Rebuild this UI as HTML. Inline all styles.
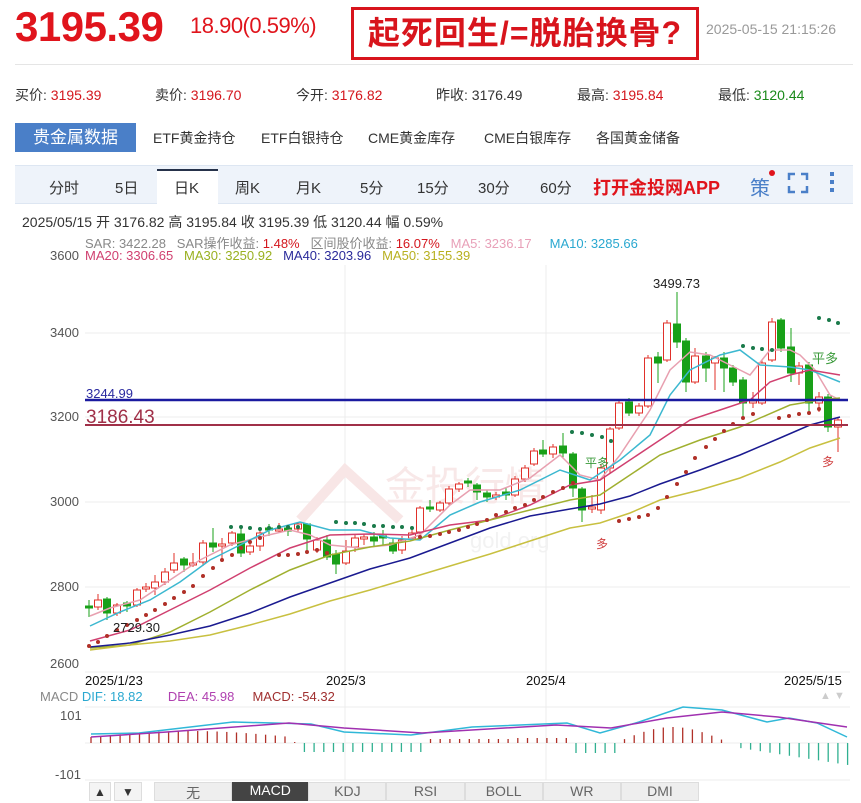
<!DOCTYPE html>
<html><head><meta charset="utf-8">
<style>
*{margin:0;padding:0;box-sizing:border-box}
body{width:861px;height:801px;background:#fff;position:relative;overflow:hidden;font-family:"Liberation Sans","Noto Sans CJK SC",sans-serif;color:#333}
.a{position:absolute;white-space:nowrap}
.r{color:#d4161d}.g{color:#1a8a1a}
</style></head><body>
<div class="a" style="left:15px;top:3px;font-size:42px;font-weight:bold;color:#e0141c;letter-spacing:-0.5px">3195.39</div>
<div class="a" style="left:190px;top:13px;font-size:22px;color:#e0141c;letter-spacing:-0.5px">18.90(0.59%)</div>
<div class="a" style="left:351px;top:7px;width:348px;height:53px;border:3px solid #d8141c;font-size:32px;font-weight:bold;color:#d8141c;text-align:center;line-height:46px;letter-spacing:1px">起死回生/=脱胎换骨?</div>
<div class="a" style="left:706px;top:21px;font-size:14px;color:#999">2025-05-15 21:15:26</div>
<div class="a" style="left:15px;top:64px;width:838px;height:1px;background:#e5e5e5"></div>
<div class="a" style="left:15px;top:85px;font-size:14px">买价: <span class="r">3195.39</span></div>
<div class="a" style="left:155px;top:85px;font-size:14px">卖价: <span class="r">3196.70</span></div>
<div class="a" style="left:296px;top:85px;font-size:14px">今开: <span class="r">3176.82</span></div>
<div class="a" style="left:436px;top:85px;font-size:14px">昨收: 3176.49</div>
<div class="a" style="left:577px;top:85px;font-size:14px">最高: <span class="r">3195.84</span></div>
<div class="a" style="left:718px;top:85px;font-size:14px">最低: <span class="g">3120.44</span></div>
<div class="a" style="left:15px;top:123px;width:121px;height:29px;background:#4a7fc8;color:#fff;font-size:17px;line-height:29px;text-align:center">贵金属数据</div>
<div class="a" style="left:153px;top:128px;font-size:14px">ETF黄金持仓</div>
<div class="a" style="left:261px;top:128px;font-size:14px">ETF白银持仓</div>
<div class="a" style="left:368px;top:128px;font-size:14px">CME黄金库存</div>
<div class="a" style="left:484px;top:128px;font-size:14px">CME白银库存</div>
<div class="a" style="left:596px;top:128px;font-size:14px">各国黄金储备</div>
<div class="a" style="left:15px;top:165px;width:838px;height:39px;background:#eef3fa;border-top:1px solid #dde6f2;border-bottom:1px solid #dde6f2"></div>
<div class="a" style="left:157px;top:169px;width:61px;height:35px;background:#fff;border-top:2px solid #26324a"></div>
<div class="a" style="left:49px;top:177px;font-size:15px">分时</div>
<div class="a" style="left:115px;top:177px;font-size:15px">5日</div>
<div class="a" style="left:174px;top:177px;font-size:15px">日K</div>
<div class="a" style="left:235px;top:177px;font-size:15px">周K</div>
<div class="a" style="left:296px;top:177px;font-size:15px">月K</div>
<div class="a" style="left:360px;top:177px;font-size:15px">5分</div>
<div class="a" style="left:417px;top:177px;font-size:15px">15分</div>
<div class="a" style="left:478px;top:177px;font-size:15px">30分</div>
<div class="a" style="left:540px;top:177px;font-size:15px">60分</div>
<div class="a" style="left:593px;top:174px;font-size:18px;font-weight:bold;color:#e0141c">打开金投网APP</div>
<div class="a" style="left:750px;top:172px;font-size:20px;color:#4a7fc8">策</div>
<div class="a" style="left:769px;top:170px;width:6px;height:6px;border-radius:3px;background:#e0141c"></div>
<svg class="a" style="left:787px;top:172px" width="22" height="22"><path d="M2 8V2H8M14 2H20V8M20 14V20H14M8 20H2V14" stroke="#4a7fc8" stroke-width="2.5" fill="none"/></svg>
<div class="a" style="left:830px;top:172px;width:4px;height:4px;background:#4a7fc8;box-shadow:0 8px 0 #4a7fc8,0 16px 0 #4a7fc8"></div>
<div class="a" style="left:22px;top:212px;font-size:14px">2025/05/15 开 3176.82 高 3195.84 收 3195.39 低 3120.44 幅 0.59%</div>
<div class="a" style="left:85px;top:233px;font-size:13px;color:#888">SAR: 3422.28 &nbsp; SAR操作收益: <span class="r">1.48%</span> &nbsp; 区间股价收益: <span class="r">16.07%</span> &nbsp; <span style="color:#e8a0b8">MA5: 3236.17</span> &nbsp; &nbsp; <span style="color:#2aa8d0">MA10: 3285.66</span></div>
<div class="a" style="left:50px;top:248px;font-size:13px;color:#555">3600</div>
<div class="a" style="left:85px;top:248px;font-size:13px"><span style="color:#d04070">MA20: 3306.65</span> &nbsp; <span style="color:#9ab020">MA30: 3250.92</span> &nbsp; <span style="color:#2a2a9a">MA40: 3203.96</span> &nbsp; <span style="color:#b8b020">MA50: 3155.39</span></div>
<div class="a" style="left:50px;top:325px;font-size:13px;color:#555">3400</div>
<div class="a" style="left:50px;top:494px;font-size:13px;color:#555">3000</div>
<div class="a" style="left:50px;top:579px;font-size:13px;color:#555">2800</div>
<div class="a" style="left:50px;top:656px;font-size:13px;color:#555">2600</div>
<div class="a" style="left:50px;top:409px;font-size:13px;color:#555">3200</div>
<svg class="a" style="left:0;top:0" width="861" height="801" id="ch">
<g stroke="#ececec" stroke-width="1">
<line x1="85" y1="333" x2="850" y2="333"/><line x1="85" y1="417" x2="850" y2="417"/><line x1="85" y1="502" x2="850" y2="502"/><line x1="85" y1="587" x2="850" y2="587"/><line x1="85" y1="672" x2="850" y2="672"/>
<line x1="345" y1="265" x2="345" y2="780"/><line x1="546" y1="265" x2="546" y2="780"/>
<line x1="85" y1="707" x2="850" y2="707"/><line x1="85" y1="780" x2="850" y2="780"/>
</g>
<text x="385" y="500" font-size="40" fill="#f8e8e8" font-family="Noto Sans CJK SC">金投行情</text>
<text x="470" y="548" font-size="22" fill="#f2f2f2" font-family="Liberation Sans">gold.org</text>
<path d="M300 520 L345 470 L400 520" stroke="#f8e6e6" stroke-width="10" fill="none"/>
<g id="cd"></g>
<g fill="none" stroke-width="1.5" id="ma"></g>
<line x1="85" y1="400" x2="848" y2="400" stroke="#1a1aa0" stroke-width="2.5"/>
<line x1="85" y1="425" x2="848" y2="425" stroke="#a03048" stroke-width="2"/>
<text x="86" y="398" font-size="13" fill="#2a2aa0">3244.99</text>
<text x="86" y="423" font-size="19" fill="#a03048">3186.43</text>
<text x="653" y="288" font-size="13" fill="#222">3499.73</text>
<text x="113" y="632" font-size="13" fill="#222">2729.30</text>
<text x="812" y="363" font-size="13" fill="#3a9a3a">平多</text>
<text x="585" y="467" font-size="12" fill="#3a9a3a">平多</text>
<text x="596" y="548" font-size="12" fill="#d04040">多</text>
<text x="822" y="466" font-size="12" fill="#d04040">多</text>
<g id="mc"></g>
</svg>
<div class="a" style="left:85px;top:673px;font-size:13px;color:#111">2025/1/23</div>
<div class="a" style="left:326px;top:673px;font-size:13px;color:#111">2025/3</div>
<div class="a" style="left:526px;top:673px;font-size:13px;color:#111">2025/4</div>
<div class="a" style="left:784px;top:673px;font-size:13px;color:#111">2025/5/15</div>
<div class="a" style="left:40px;top:689px;font-size:13px;color:#888">MACD <span style="color:#2aa8d0">DIF: 18.82</span> &nbsp; &nbsp; &nbsp; <span style="color:#b040b0">DEA: 45.98</span> &nbsp; &nbsp; <span style="color:#a03030">MACD: -54.32</span></div>
<div class="a" style="left:60px;top:708px;font-size:13px;color:#555">101</div>
<div class="a" style="left:55px;top:767px;font-size:13px;color:#555">-101</div>
<div class="a" style="left:820px;top:690px;font-size:11px;color:#ccc">▲ ▼</div>
<div class="a" style="left:89px;top:782px;width:22px;height:19px;background:#f4f4f4;border:1px solid #ddd;font-size:12px;text-align:center;line-height:18px">▲</div>
<div class="a" style="left:114px;top:782px;width:28px;height:19px;background:#f4f4f4;border:1px solid #ddd;font-size:12px;text-align:center;line-height:18px">▼</div>
<div class="a" style="left:154px;top:782px;width:545px;height:19px;display:flex;font-size:14px;color:#666">
<div style="flex:1;background:#eee;border:1px solid #ddd;text-align:center">无</div>
<div style="flex:1;background:#444;color:#fff;text-align:center">MACD</div>
<div style="flex:1;background:#eee;border:1px solid #ddd;text-align:center">KDJ</div>
<div style="flex:1;background:#eee;border:1px solid #ddd;text-align:center">RSI</div>
<div style="flex:1;background:#eee;border:1px solid #ddd;text-align:center">BOLL</div>
<div style="flex:1;background:#eee;border:1px solid #ddd;text-align:center">WR</div>
<div style="flex:1;background:#eee;border:1px solid #ddd;text-align:center">DMI</div>
</div>
<script>
var NS="http://www.w3.org/2000/svg";
function el(p,t,a){var e=document.createElementNS(NS,t);for(var k in a)e.setAttribute(k,a[k]);p.appendChild(e);return e;}
var cd=document.getElementById('cd');
var C=[[89,606,608,0,600,617],[98,600,607,1,594,610],[107,599,613,0,597,620],[117,605,613,1,603,616],[127,603,606,0,601,612],[137,590,605,1,588,607],[146,587,589,1,583,592],[155,582,588,1,575,595],[165,572,582,1,568,585],[174,563,570,1,553,573],[184,559,565,0,557,572],[193,563,565,1,553,567],[203,543,562,1,540,566],[213,543,547,0,528,552],[222,544,546,1,538,562],[232,533,543,1,531,546],[241,534,553,0,528,557],[250,546,552,1,543,555],[260,533,546,1,531,551],[269,528,530,0,524,536],[279,529,531,1,523,533],[288,528,531,0,525,536],[298,524,529,1,522,532],[307,524,539,0,523,552],[317,540,550,1,537,553],[327,540,557,0,535,560],[336,554,564,0,550,574],[346,551,563,1,540,565],[355,538,547,1,535,552],[364,537,539,1,534,545],[374,537,541,0,532,547],[383,536,538,0,530,545],[393,543,551,0,538,554],[402,540,550,1,536,554],[412,533,538,1,530,540],[420,508,532,1,506,534],[430,507,509,0,500,512],[440,503,510,1,501,512],[449,489,503,1,486,505],[459,484,489,1,482,492],[468,481,483,0,478,487],[477,485,492,0,483,500],[487,493,497,0,490,502],[496,495,497,1,492,500],[506,492,495,0,488,500],[515,479,495,1,476,497],[525,468,479,1,465,482],[534,451,464,1,448,466],[543,450,454,0,440,457],[553,447,454,1,444,458],[563,446,453,0,433,458],[573,454,488,0,452,497],[582,489,510,0,487,522],[592,507,509,1,495,513],[601,468,510,1,464,514],[610,429,468,1,427,474],[619,403,428,1,401,430],[629,402,413,0,398,416],[639,406,413,1,403,416],[648,358,406,1,355,408],[658,357,363,0,352,383],[667,323,360,1,320,362],[677,324,342,0,292,348],[686,341,382,0,338,392],[695,356,382,1,348,384],[706,356,368,0,352,382],[715,358,363,1,356,390],[724,358,368,0,352,392],[733,368,382,0,365,386],[743,380,403,0,377,418],[753,401,403,1,392,408],[762,363,403,1,360,405],[772,322,360,1,318,362],[781,320,348,0,318,352],[791,347,373,0,328,382],[799,366,373,1,362,385],[809,365,403,0,362,413],[819,397,403,1,392,412],[828,397,427,0,394,432],[838,420,427,1,418,452]];
C.forEach(function(c){var col=c[3]?'#e0302a':'#18a018';
el(cd,'line',{x1:c[0],x2:c[0],y1:c[4],y2:c[5],stroke:col,'stroke-width':1});
el(cd,'rect',{x:c[0]-3.5,y:c[1],width:7,height:Math.max(1.5,c[2]-c[1]),fill:c[3]?'#fff':col,stroke:col,'stroke-width':1});});
var ma=document.getElementById('ma');
var L=[['#e8a0b0',"90,616 110,608 140,600 170,580 200,560 230,545 260,537 290,530 310,535 330,545 360,548 390,545 420,535 450,505 470,490 500,490 530,478 560,455 580,475 600,480 620,455 650,410 670,370 690,352 710,355 730,365 750,375 770,350 790,350 800,355 815,370 830,395 840,400"],
['#3cb8d0',"90,626 120,612 150,600 180,582 210,560 240,545 270,530 300,522 330,530 360,530 390,538 420,540 450,515 480,502 520,490 560,470 590,480 620,460 650,435 670,395 690,370 720,355 740,350 760,365 790,367 810,370 840,382"],
['#d04070',"90,641 130,630 170,610 210,590 250,568 290,548 330,535 370,534 410,535 450,525 490,520 530,505 570,485 600,480 630,460 660,440 690,420 720,410 750,400 770,382 790,375 810,370 840,375"],
['#a0b030',"90,648 130,645 170,632 210,612 250,590 290,570 330,555 370,547 410,541 450,530 490,520 530,510 570,500 600,495 630,475 660,455 700,440 740,427 760,418 790,405 820,400 840,398"],
['#1a1a90',"90,647 130,643 170,635 210,626 250,613 290,597 330,583 370,569 410,558 450,543 490,528 530,516 570,509 600,504 630,496 660,484 700,470 740,455 780,438 810,425 840,417"],
['#c8c040',"90,650 130,645 170,641 210,635 250,625 290,614 330,601 370,590 410,578 450,566 490,554 530,541 570,528 600,523 630,513 660,500 700,490 740,478 780,462 810,448 840,438"]];
L.forEach(function(l){el(ma,'polyline',{points:l[1],stroke:l[0]});});
var R=[[89,646],[98,642],[107,636],[117,630],[127,625],[137,620],[146,615],[155,610],[165,604],[174,598],[184,592],[193,586],[203,576],[213,568],[222,560],[232,555],[241,548],[250,542],[260,538],[279,555],[288,555],[298,554],[307,552],[317,550],[327,553],[420,537],[430,536],[440,534],[449,532],[459,530],[468,527],[477,524],[487,520],[496,515],[506,512],[515,508],[525,505],[534,500],[543,497],[553,492],[563,488],[573,483],[619,521],[629,519],[639,517],[648,515],[658,508],[667,497],[677,484],[686,472],[695,458],[706,447],[715,439],[724,431],[733,424],[743,418],[753,414],[779,418],[789,416],[799,414],[809,413],[819,409]];
R.forEach(function(p){el(ma,'circle',{cx:p[0],cy:p[1],r:2,fill:'#b03028',stroke:'none'});});
var G=[[231,527],[241,527],[250,528],[260,529],[269,528],[279,527],[288,527],[298,527],[336,522],[346,523],[355,523],[364,524],[374,526],[383,526],[393,527],[402,527],[412,528],[572,432],[582,433],[592,435],[602,437],[611,441],[743,346],[753,348],[762,349],[772,350],[819,318],[829,320],[838,323]];
G.forEach(function(p){el(ma,'circle',{cx:p[0],cy:p[1],r:2,fill:'#1a7a4a',stroke:'none'});});
var mc=document.getElementById('mc');
el(mc,'line',{x1:85,x2:848,y1:743,y2:743,stroke:'#eee'});
for(var x=91;x<=848;x+=9.7){var h=0;
if(x<285)h=6+6*Math.sin((x-91)/200*Math.PI);else if(x<300)h=1;else if(x<430)h=-9;else if(x<510)h=4;else if(x<575)h=5;else if(x<620)h=-10;else if(x<725)h=14*Math.sin((x-620)/105*Math.PI)+2;else if(x<740)h=0;else h=-(5+(x-740)/108*17);
if(Math.abs(h)<0.5)continue;
el(mc,'line',{x1:x,x2:x,y1:743,y2:743-h,stroke:h>0?'#b03028':'#30b090','stroke-width':1.3});}
el(mc,'polyline',{points:"91,734 139,733 233,722 311,724 344,732 411,735 472,727 567,723 600,733 639,722 683,707 722,710 767,722 789,718 817,723 847,737",stroke:'#30b8d8',fill:'none','stroke-width':1.5});
el(mc,'polyline',{points:"91,737 167,732 289,723 344,728 422,733 556,725 611,728 667,718 722,712 778,717 847,727",stroke:'#a030b0',fill:'none','stroke-width':1.5});
</script>
</body></html>
